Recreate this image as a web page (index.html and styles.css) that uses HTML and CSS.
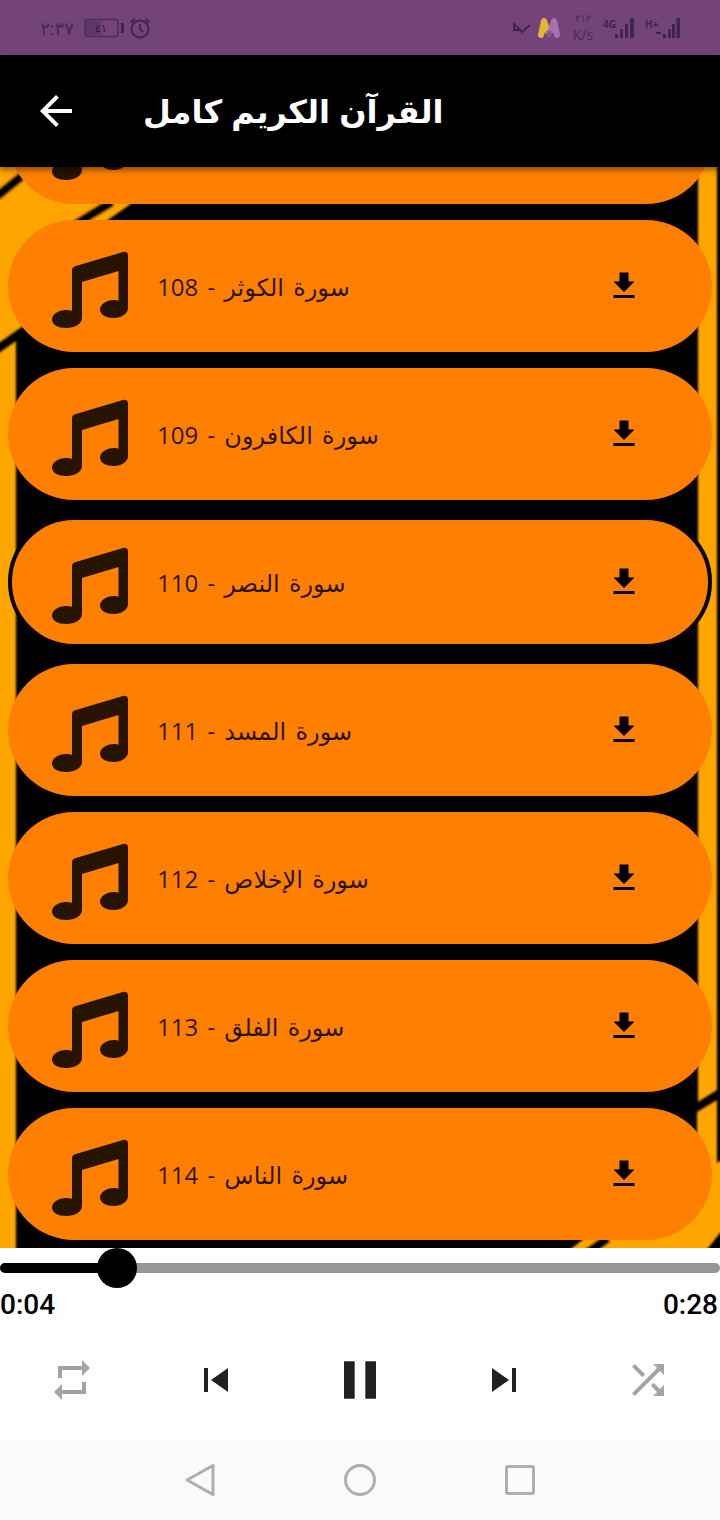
FILE: index.html
```html
<!DOCTYPE html>
<html lang="ar">
<head>
<meta charset="utf-8">
<title>القرآن الكريم كامل</title>
<link rel="stylesheet" href="styles.css">
</head>
<body>
<div class="screen">
  <header class="status">
    <div class="status-group">
      <span class="clock">٢:٣٧</span>
      <svg class="battery" width="41" height="20" viewBox="0 0 41 20"><rect x="1" y="1.500" width="33" height="17" rx="2" fill="none" stroke="#4b2c55" stroke-width="1.400"/><rect x="2" y="2.500" width="15" height="15" fill="#5e3868"/><rect x="37" y="5" width="3" height="10" fill="#3f2548"/><text x="17" y="14" class="battery-text">٤١</text></svg>
      <svg class="alarm" width="24" height="24" viewBox="0 0 24 24"><circle cx="12" cy="13" r="8.500" fill="none" stroke="#3f2548" stroke-width="2"/><path d="M12 8v5.500l3.500 2.500" fill="none" stroke="#3f2548" stroke-width="1.800"/><path d="M2.500 6.500l4-3.500M21.500 6.500l-4-3.500" stroke="#3f2548" stroke-width="2" fill="none"/></svg>
    </div>
    <div class="status-group status-right">
      <svg class="check" width="18" height="12" viewBox="0 0 18 12"><path d="M1 1V8H7M1.500 2.500L9 10L17 3" fill="none" stroke="#3f2548" stroke-width="1.800"/></svg>
      <svg class="mlogo" width="24" height="24" viewBox="0 0 24 24"><path d="M4 19L7 5L10.500 15" fill="none" stroke="#e2b533" stroke-width="6" stroke-linecap="round" stroke-linejoin="round"/><path d="M13.500 15L17 5L20 19" fill="none" stroke="#a872ae" stroke-width="6" stroke-linecap="round" stroke-linejoin="round"/><path d="M10.500 15L12 21L13.500 15" fill="none" stroke="#8a5590" stroke-width="3"/></svg>
      <div class="speed"><span class="speed-num">٢١٢</span><span class="speed-unit">K/s</span></div>
      <div class="signal">
        <span class="net">4G</span>
        <svg width="22" height="20" viewBox="0 0 22 20"><path d="M1 16h3v4H1zM6 11h3v9H6zM11 6h3v14h-3zM16 0h4v20h-4z" fill="#3f2548"/></svg>
      </div>
      <div class="signal">
        <span class="net">H+</span>
        <svg width="24" height="20" viewBox="0 0 24 20"><path d="M0 14h5v2H0zM7 16h3v4H7zM12 11h3v9h-3zM16 6h3v14h-3zM20.500 0h3.500v20h-3.500z" fill="#3f2548"/></svg>
      </div>
    </div>
  </header>

  <header class="appbar">
    <svg class="back" width="48" height="48" viewBox="0 0 24 24"><path d="M20 11H7.830l5.590-5.590L12 4l-8 8 8 8 1.410-1.410L7.830 13H20v-2z" fill="#fff"/></svg>
    <h1 class="title">القرآن الكريم كامل</h1>
  </header>

  <main class="list-area">
    <svg class="wallpaper" width="720" height="1081" viewBox="0 167 720 1081">
      <defs><filter id="soft"><feGaussianBlur stdDeviation="0.8"/></filter></defs>
      <g filter="url(#soft)">
        <path class="paper" d="M-4 160H170L132 203 105 222 60 300 16 331-4 345z"/>
        <path class="paper" d="M-4 355L16 341V1260H-4z"/>
        <path class="paper" d="M698 160H717V1090L698 1102z"/>
        <path class="paper" d="M567 1252L697 1150V1112L717 1100V1163L724 1158V1228L705 1252z"/>
        <path class="stripe" d="M-4 197L32 168M76 224L112 202M586 1254L608 1238" />
      </g>
    </svg>
    <ul class="tracks">
      <li class="track"><svg class="note"><use href="#note"/></svg><svg class="dl"><use href="#dl"/></svg></li>
      <li class="track"><svg class="note"><use href="#note"/></svg><span class="name">سورة الكوثر - 108</span><svg class="dl"><use href="#dl"/></svg></li>
      <li class="track"><svg class="note"><use href="#note"/></svg><span class="name">سورة الكافرون - 109</span><svg class="dl"><use href="#dl"/></svg></li>
      <li class="track active"><svg class="note"><use href="#note"/></svg><span class="name">سورة النصر - 110</span><svg class="dl"><use href="#dl"/></svg></li>
      <li class="track"><svg class="note"><use href="#note"/></svg><span class="name">سورة المسد - 111</span><svg class="dl"><use href="#dl"/></svg></li>
      <li class="track"><svg class="note"><use href="#note"/></svg><span class="name">سورة الإخلاص - 112</span><svg class="dl"><use href="#dl"/></svg></li>
      <li class="track"><svg class="note"><use href="#note"/></svg><span class="name">سورة الفلق - 113</span><svg class="dl"><use href="#dl"/></svg></li>
      <li class="track"><svg class="note"><use href="#note"/></svg><span class="name">سورة الناس - 114</span><svg class="dl"><use href="#dl"/></svg></li>
    </ul>
  </main>

  <section class="player">
    <div class="slider"><div class="slider-fill"></div><div class="slider-thumb"></div></div>
    <div class="times"><span>0:04</span><span>0:28</span></div>
    <div class="controls">
      <svg class="muted" width="48" height="48" viewBox="0 0 24 24"><path d="M7 7h10v3l4-4-4-4v3H5v6h2V7zm10 10H7v-3l-4 4 4 4v-3h12v-6h-2v4z"/></svg>
      <svg class="solid" width="48" height="48" viewBox="0 0 24 24"><path d="M6 6h2v12H6zm3.500 6l8.500 6V6z"/></svg>
      <svg class="solid" width="64" height="64" viewBox="0 0 24 24"><path d="M6 19h4V5H6v14zm8-14v14h4V5h-4z"/></svg>
      <svg class="solid" width="48" height="48" viewBox="0 0 24 24"><path d="M6 18l8.500-6L6 6v12zM16 6v12h2V6h-2z"/></svg>
      <svg class="muted" width="48" height="48" viewBox="0 0 24 24"><path d="M10.590 9.170L5.410 4 4 5.410l5.170 5.170 1.420-1.410zM14.500 4l2.040 2.040L4 18.590 5.410 20 17.960 7.460 20 9.500V4h-5.500zm.33 9.410l-1.410 1.410 3.130 3.130L14.500 20H20v-5.500l-2.040 2.040-3.130-3.130z"/></svg>
    </div>
  </section>

  <nav class="navbar">
    <svg width="36" height="36" viewBox="0 0 36 36"><path d="M31 3.500V32.500L5 18z" class="nav-shape"/></svg>
    <svg width="36" height="36" viewBox="0 0 36 36"><circle cx="18" cy="18" r="14.500" class="nav-shape"/></svg>
    <svg width="36" height="36" viewBox="0 0 36 36"><rect x="4.500" y="4.500" width="27" height="27" rx="1.500" class="nav-shape"/></svg>
  </nav>
</div>

<svg class="sprites" width="0" height="0">
  <symbol id="note" viewBox="0 0 80 80"><path d="M22 20.500c0-2 1-3.500 3-4.200L73 2c3-.8 5 .8 5 3.500V58c0 6-7 10-14 10-8 0-14-3.500-14-8.500S56 50 64 50c2 0 3 .2 4.500 .7V21L32 32V68c0 6-7 10-16 10-8 0-14-3.500-14-8.500S8 60 16 60c2.500 0 4.500 .3 6 1z"/></symbol>
  <symbol id="dl" viewBox="0 0 24 24"><path d="M19 9h-4V3H9v6H5l7 7 7-7zM5 18v2h14v-2H5z"/></symbol>
</svg>
</body>
</html>
```
FILE: styles.css
```css
* { box-sizing: border-box; }
html, body { margin: 0; padding: 0; }
body { font-family: "Open Sans", "Noto Sans", "DejaVu Sans", sans-serif; background: #fff; }
.screen { width: 720px; height: 1520px; display: flex; flex-direction: column; overflow: hidden; }
.sprites { position: absolute; }

.status { height: 55px; flex: none; background: #74437a; display: flex; justify-content: space-between; align-items: center; padding: 0 40px 0 38px; color: #3f2548; position: relative; }
.status-group { display: flex; align-items: center; gap: 8px; }
.status-right { gap: 9px; }
.clock { font-size: 18px; line-height: 20px; width: 38px; text-align: center; color: #46294f; }
.alarm { margin-left: -5px; }
.battery-text { font-size: 11px; fill: #2e1a36; text-anchor: middle; }
.speed { display: flex; flex-direction: column; align-items: center; width: 26px; line-height: 1; }
.speed-num { font-size: 10px; height: 15px; color: #46294f; }
.speed-unit { font-size: 14px; color: #46294f; }
.signal { display: flex; align-items: flex-start; height: 20px; margin-left: -2px; }
.signal + .signal { margin-left: 0; }
.net { font-size: 10px; font-weight: 700; line-height: 12px; width: 12px; margin-right: -1px; color: #3f2548; }
.mlogo { margin-left: -3px; }

.appbar { height: 112px; flex: none; background: #000; display: flex; align-items: center; padding-left: 32px; position: relative; z-index: 2; box-shadow: 0 3px 6px rgba(0,0,0,.45); }
.title { margin: 0 0 0 63px; color: #fff; font-size: 32px; font-weight: 600; line-height: 1; direction: rtl; word-spacing: 1px; }

.list-area { height: 1081px; flex: none; position: relative; overflow: hidden; background: #000; }
.wallpaper { position: absolute; left: 0; top: 0; }
.paper { fill: #ffa506; }
.stripe { fill: none; stroke: #000; stroke-width: 9; }
.tracks { list-style: none; position: relative; margin: -95px 0 0; padding: 0 8px; display: flex; flex-direction: column; gap: 16px; }
.track { height: 132px; border-radius: 66px; background: #ff8000; display: flex; align-items: center; padding-left: 42px; color: rgba(0,0,0,.85); }
.track.active { border: 4px solid #000; padding-left: 38px; }
.note { width: 80px; height: 80px; margin-top: 8px; fill: rgba(0,0,0,.85); flex: none; }
.name { font-size: 24px; line-height: 32px; margin: 2px 0 0 27px; direction: rtl; unicode-bidi: isolate; word-spacing: 3px; flex: none; }
.dl { width: 36px; height: 36px; fill: #000; margin-left: auto; margin-right: 70px; }
.track.active .dl { margin-right: 66px; }

.player { height: 192px; flex: none; background: #fff; position: relative; }
.slider { height: 10px; margin-top: 15px; background: #969696; border-radius: 5px; position: relative; }
.slider-fill { width: 117px; height: 10px; background: #000; border-radius: 5px; }
.slider-thumb { position: absolute; left: 97px; top: -15px; width: 40px; height: 40px; border-radius: 50%; background: #000; }
.times { display: flex; justify-content: space-between; padding-right: 2px; margin-top: 15px; font-family: Roboto, sans-serif; font-size: 28px; font-weight: 500; line-height: 34px; color: #000; }
.controls { display: grid; grid-template-columns: repeat(5, 144px); justify-items: center; align-items: center; height: 64px; margin-top: 26px; }
.muted { fill: #a3a3a3; }
.solid { fill: #212121; }

.navbar { height: 80px; flex: none; background: #fafafa; display: flex; justify-content: center; align-items: center; gap: 124px; }
.nav-shape { fill: none; stroke: #aeaeae; stroke-width: 3; stroke-linejoin: round; }
```
